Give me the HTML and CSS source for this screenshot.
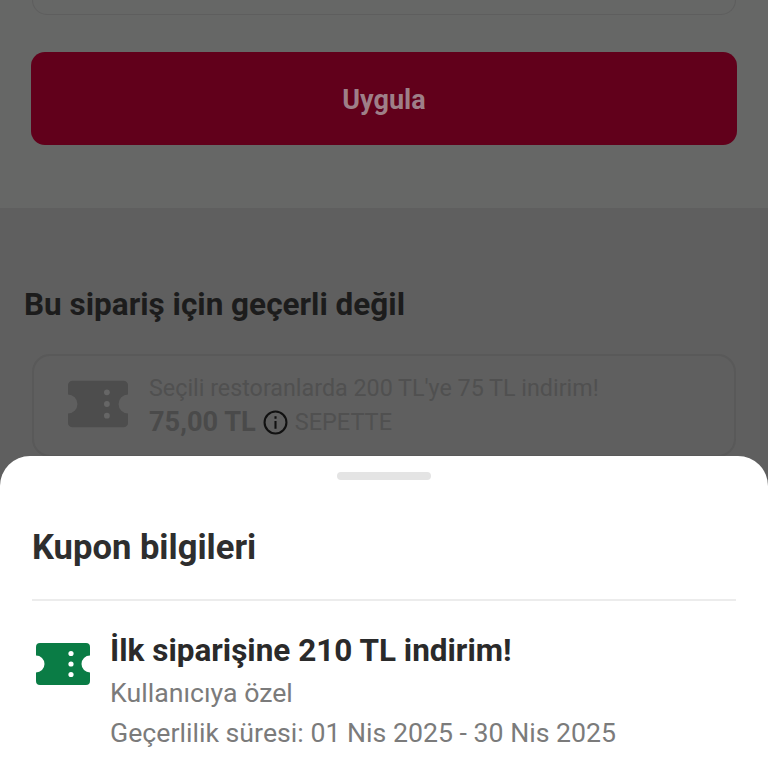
FILE: index.html
```html
<!DOCTYPE html>
<html lang="tr">
<head>
    <meta charset="utf-8">
    <title>Kupon bilgileri</title>
    <link rel="stylesheet" href="styles.css">
</head>
<body>

<div class="page">
    <div class="apply-section">
        <div class="code-input"></div>
        <div class="apply-btn">Uygula</div>
    </div>

    <div class="invalid-section">
        <h2>Bu sipariş için geçerli değil</h2>
        <div class="coupon-card">
            <svg class="ticket ticket-dim" viewBox="0 0 54 42">
                <path d="M4 0H50a4 4 0 0 1 4 4V12.5a8.5 8.5 0 0 0 0 17V38a4 4 0 0 1-4 4H4a4 4 0 0 1-4-4V29.5a8.5 8.5 0 0 0 0-17V4a4 4 0 0 1 4-4Z"/>
                <circle class="hole" cx="35" cy="10.5" r="2.6"/>
                <circle class="hole" cx="35" cy="21" r="2.6"/>
                <circle class="hole" cx="35" cy="31.5" r="2.6"/>
            </svg>
            <div class="coupon-text">
                <div class="coupon-name">Seçili restoranlarda 200 TL'ye 75 TL indirim!</div>
                <div class="coupon-row">
                    <span class="coupon-price">75,00 TL</span>
                    <svg class="info" viewBox="0 0 24 24">
                        <circle cx="12" cy="12" r="10.5"/>
                        <path d="M12 10.5V18M12 6v2.4"/>
                    </svg>
                    <span class="coupon-tag">SEPETTE</span>
                </div>
            </div>
        </div>
    </div>

    <div class="sheet">
        <div class="handle"></div>
        <h1>Kupon bilgileri</h1>
        <div class="detail">
            <svg class="ticket ticket-green" viewBox="0 0 54 42">
                <path d="M4 0H50a4 4 0 0 1 4 4V12.5a8.5 8.5 0 0 0 0 17V38a4 4 0 0 1-4 4H4a4 4 0 0 1-4-4V29.5a8.5 8.5 0 0 0 0-17V4a4 4 0 0 1 4-4Z"/>
                <circle class="hole" cx="35" cy="10.5" r="2.6"/>
                <circle class="hole" cx="35" cy="21" r="2.6"/>
                <circle class="hole" cx="35" cy="31.5" r="2.6"/>
            </svg>
            <div class="detail-text">
                <div class="detail-title">İlk siparişine 210 TL indirim!</div>
                <div class="detail-line">Kullanıcıya özel</div>
                <div class="detail-line">Geçerlilik süresi: 01 Nis 2025 - 30 Nis 2025</div>
            </div>
        </div>
    </div>
</div>

</body>
</html>
```

FILE: styles.css
```css
html, body {
    margin: 0;
    height: 100%;
}
body {
    font-family: Roboto, "Liberation Sans", sans-serif;
    background: #5f5f5f;
    overflow: hidden;
}
.page {
    position: relative;
    height: 768px;
    overflow: hidden;
}

/* dimmed page behind the sheet */
.apply-section {
    height: 208px;
    box-sizing: border-box;
    padding: 0 31px;
    background: #666766;
}
.code-input {
    height: 15px;
    box-sizing: border-box;
    margin: 0 1px 37px;
    border: 1px solid #5e5e5e;
    border-top: 0;
    border-radius: 0 0 18px 18px;
}
.apply-btn {
    height: 93px;
    border-radius: 14px;
    background: #61001b;
    color: #9e7f88;
    font-size: 27px;
    font-weight: 700;
    line-height: 97px;
    text-align: center;
}
.invalid-section {
    padding: 79px 32px 0 24px;
}
.invalid-section h2 {
    margin: 0;
    height: 36px;
    color: #1c1c1c;
    font-size: 31.5px;
    font-weight: 700;
    line-height: 36px;
    white-space: nowrap;
}
.coupon-card {
    display: flex;
    gap: 21px;
    height: 103px;
    box-sizing: border-box;
    margin: 31px 0 0 8px;
    padding: 18px 34px;
    border: 2px solid #595959;
    border-radius: 18px;
}
.ticket {
    flex: none;
    width: 54px;
    height: 42px;
}
.ticket-dim {
    width: 60px;
    height: 48px;
    margin-top: 6px;
}
.ticket-dim path {
    fill: #4d4d4d;
}
.ticket-dim .hole {
    fill: #666;
}
.coupon-name {
    color: #505050;
    font-size: 23.3px;
    line-height: 28px;
    white-space: nowrap;
}
.coupon-row {
    display: flex;
    align-items: center;
    height: 36px;
    margin-top: 2px;
}
.coupon-price {
    color: #4a4a4a;
    font-size: 27.2px;
    font-weight: 700;
}
.info {
    width: 25px;
    height: 25px;
    margin: 0 7px 0 7px;
    fill: none;
    stroke: #111;
    stroke-width: 2;
}
.coupon-tag {
    color: #505050;
    font-size: 23.5px;
}

/* bottom sheet */
.sheet {
    position: absolute;
    left: 0;
    right: 0;
    top: 456px;
    bottom: 0;
    padding: 0 32px;
    background: #fff;
    border-radius: 30px 30px 0 0;
}
.handle {
    width: 94px;
    height: 8px;
    margin: 16px auto 0;
    border-radius: 4px;
    background: #e4e4e4;
}
.sheet h1 {
    margin: 0;
    padding: 47px 0 32px;
    border-bottom: 2px solid #ececec;
    color: #2e2e2e;
    font-size: 34.6px;
    font-weight: 700;
    line-height: 40px;
}
.detail {
    display: flex;
    gap: 20px;
    padding: 30px 0 0 4px;
}
.ticket-green {
    margin-top: 12px;
}
.ticket-green path {
    fill: #0a7c45;
}
.ticket-green .hole {
    fill: #fff;
}
.detail-title {
    margin-bottom: 2px;
    color: #2a2a2a;
    font-size: 31.5px;
    font-weight: 700;
    line-height: 40px;
    white-space: nowrap;
}
.detail-line {
    color: #7b7b7b;
    font-size: 26.7px;
    line-height: 40px;
    white-space: nowrap;
}
```
